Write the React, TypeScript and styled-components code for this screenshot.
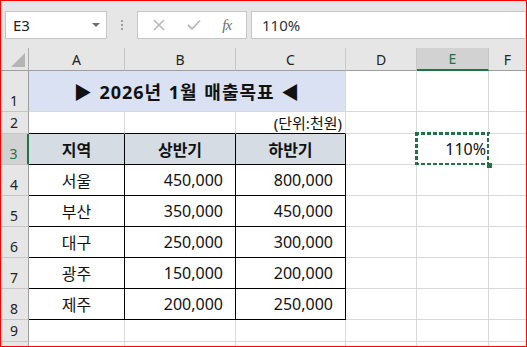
import styled, { createGlobalStyle, css } from "styled-components";

const GlobalStyle = createGlobalStyle`
  body {
    margin: 0;
    background: #fff;
    font-family: "Noto Sans", "Noto Sans CJK KR", sans-serif;
  }
`;

const GRID = "#d9d9d9";
const HEAD_LINE = "#c6c6c6";
const HEAD_BOTTOM = "#9e9e9e";
const GREEN = "#217346";

const Frame = styled.div`
  position: relative;
  width: 527px;
  height: 347px;
  overflow: hidden;
  background: #fff;
`;

const RedOutline = styled.div`
  position: absolute;
  inset: 0;
  border: 1px solid #ff0000;
  pointer-events: none;
`;

/* ---------- formula bar ---------- */

const FormulaBar = styled.div`
  display: flex;
  align-items: flex-start;
  height: 48px;
  box-sizing: border-box;
  padding: 11px 2px 0 5px;
  background: #e6e6e6;
`;

const NameBox = styled.div`
  display: flex;
  align-items: center;
  justify-content: space-between;
  width: 102px;
  height: 28px;
  box-sizing: border-box;
  padding: 0 6px 0 7px;
  border: 1px solid #c6c6c6;
  background: #fff;
  font-size: 15px;
  color: #222;
`;

const DropArrow = styled.span`
  width: 0;
  height: 0;
  border-left: 4px solid transparent;
  border-right: 4px solid transparent;
  border-top: 4px solid #6d6d6d;
`;

const Grip = styled.div`
  display: flex;
  flex-direction: column;
  align-items: center;
  justify-content: center;
  gap: 2px;
  width: 30px;
  height: 28px;
`;

const GripDot = styled.span`
  width: 2px;
  height: 2px;
  background: #a0a0a0;
`;

const FxBox = styled.div`
  display: flex;
  align-items: center;
  justify-content: space-around;
  width: 110px;
  height: 28px;
  box-sizing: border-box;
  padding: 0 4px;
  border: 1px solid #c6c6c6;
  background: #fff;
`;

const FxLabel = styled.span`
  font-family: "Liberation Serif", serif;
  font-style: italic;
  font-size: 15px;
  color: #6b6b6b;
  letter-spacing: -1px;
`;

const FormulaInput = styled.div`
  flex: 1;
  display: flex;
  align-items: center;
  height: 28px;
  box-sizing: border-box;
  margin-left: 4px;
  padding-left: 10px;
  border: 1px solid #c6c6c6;
  border-right: none;
  background: #fff;
  font-size: 15px;
  color: #333;
`;

/* ---------- sheet ---------- */

const Sheet = styled.div`
  display: grid;
  grid-template-columns: 29px 96px 111px 110px 71px 72px 38px;
  grid-template-rows: 23px 41px 22px repeat(6, 31px) 22px 22px;
`;

const Corner = styled.div`
  position: relative;
  background: #e6e6e6;
  border-right: 1px solid #ababab;
  border-bottom: 1px solid ${HEAD_BOTTOM};
`;

const CornerMark = styled.span`
  position: absolute;
  right: 3px;
  bottom: 3px;
  width: 0;
  height: 0;
  border-left: 14px solid transparent;
  border-bottom: 14px solid #b4b4b4;
`;

const ColHead = styled.div<{ $active?: boolean }>`
  display: flex;
  align-items: center;
  justify-content: center;
  box-sizing: border-box;
  background: #e6e6e6;
  border-right: 1px solid ${HEAD_LINE};
  border-bottom: 1px solid ${HEAD_BOTTOM};
  font-size: 14px;
  color: #222;
  ${(p) =>
    p.$active &&
    css`
      background: #d2d2d2;
      color: ${GREEN};
      border-bottom: 2px solid ${GREEN};
    `}
`;

const RowHead = styled.div<{ $active?: boolean }>`
  display: flex;
  align-items: flex-end;
  justify-content: center;
  box-sizing: border-box;
  padding-bottom: 1px;
  background: #e6e6e6;
  border-right: 1px solid ${HEAD_BOTTOM};
  border-bottom: 1px solid ${HEAD_LINE};
  font-size: 14px;
  line-height: 18px;
  color: #222;
  ${(p) =>
    p.$active &&
    css`
      background: #d2d2d2;
      color: ${GREEN};
      border-right: 2px solid ${GREEN};
    `}
`;

type Align = "left" | "center" | "right";

const Cell = styled.div<{
  $align?: Align;
  $span?: number;
  $fill?: string;
  $bold?: boolean;
  $boxed?: boolean;
  $topRule?: boolean;
  $size?: number;
}>`
  position: relative;
  display: flex;
  align-items: center;
  justify-content: ${(p) =>
    p.$align === "right" ? "flex-end" : p.$align === "center" ? "center" : "flex-start"};
  box-sizing: border-box;
  padding: 0 ${(p) => (p.$align === "right" ? "12px" : "4px")} 0 4px;
  grid-column: span ${(p) => p.$span ?? 1};
  background: ${(p) => p.$fill ?? "#fff"};
  border-right: 1px solid ${(p) => (p.$boxed ? "#000" : GRID)};
  border-bottom: 1px solid ${(p) => (p.$boxed || p.$topRule ? "#000" : GRID)};
  font-size: ${(p) => p.$size ?? 16}px;
  font-weight: ${(p) => (p.$bold ? 700 : 400)};
  color: #111;
  white-space: nowrap;
`;

const TitleCell = styled(Cell)`
  letter-spacing: 1px;
  word-spacing: 1px;
`;

const UnitCell = styled(Cell)`
  padding-right: 3px;
`;

const SelectedCell = styled(Cell)`
  padding-right: 2px;

  &::after {
    content: "";
    position: absolute;
    inset: -2px;
    background:
      repeating-linear-gradient(90deg, ${GREEN} 0 4px, #fff 4px 6px) top / 100% 3px no-repeat,
      repeating-linear-gradient(90deg, ${GREEN} 0 4px, #fff 4px 6px) bottom / 100% 3px no-repeat,
      repeating-linear-gradient(180deg, ${GREEN} 0 4px, #fff 4px 6px) left / 3px 100% no-repeat,
      repeating-linear-gradient(180deg, ${GREEN} 0 4px, #fff 4px 6px) right / 3px 100% no-repeat;
    pointer-events: none;
  }
`;

const FillHandle = styled.span`
  position: absolute;
  right: -4px;
  bottom: -4px;
  width: 5px;
  height: 5px;
  background: ${GREEN};
  z-index: 1;
`;

const columns = ["A", "B", "C", "D", "E", "F"];

const sales = [
  ["서울", "450,000", "800,000"],
  ["부산", "350,000", "450,000"],
  ["대구", "250,000", "300,000"],
  ["광주", "150,000", "200,000"],
  ["제주", "200,000", "250,000"],
];

const Blank = ({ n }: { n: number }) => (
  <>
    {Array.from({ length: n }, (_, i) => (
      <Cell key={i} />
    ))}
  </>
);

const XIcon = () => (
  <svg width="12" height="12" viewBox="0 0 12 12">
    <path d="M1 1 L11 11 M11 1 L1 11" stroke="#b8b8b8" strokeWidth="1.6" fill="none" />
  </svg>
);

const CheckIcon = () => (
  <svg width="14" height="12" viewBox="0 0 14 12">
    <path d="M1 6 L5 10 L13 1.5" stroke="#b8b8b8" strokeWidth="1.8" fill="none" />
  </svg>
);

const Row = ({
  index,
  region,
  first,
  second,
}: {
  index: number;
  region: string;
  first: string;
  second: string;
}) => (
  <>
    <RowHead>{index}</RowHead>
    <Cell $boxed $align="center">
      {region}
    </Cell>
    <Cell $boxed $align="right">
      {first}
    </Cell>
    <Cell $boxed $align="right">
      {second}
    </Cell>
    <Blank n={3} />
  </>
);

const App = () => {
  return (
    <Frame>
      <GlobalStyle />
      <FormulaBar>
        <NameBox>
          E3
          <DropArrow />
        </NameBox>
        <Grip>
          <GripDot />
          <GripDot />
          <GripDot />
        </Grip>
        <FxBox>
          <XIcon />
          <CheckIcon />
          <FxLabel>fx</FxLabel>
        </FxBox>
        <FormulaInput>110%</FormulaInput>
      </FormulaBar>

      <Sheet>
        <Corner>
          <CornerMark />
        </Corner>
        {columns.map((c) => (
          <ColHead key={c} $active={c === "E"}>
            {c}
          </ColHead>
        ))}

        {/* 1 */}
        <RowHead>1</RowHead>
        <TitleCell $span={3} $align="center" $fill="#d9e1f2" $bold $size={18}>
          ▶ 2026년 1월 매출목표 ◀
        </TitleCell>
        <Blank n={3} />

        {/* 2 */}
        <RowHead>2</RowHead>
        <Cell $topRule />
        <Cell $topRule />
        <UnitCell $topRule $align="right" $size={15}>
          (단위:천원)
        </UnitCell>
        <Blank n={3} />

        {/* 3 */}
        <RowHead $active>3</RowHead>
        {["지역", "상반기", "하반기"].map((h) => (
          <Cell key={h} $boxed $bold $align="center" $fill="#d6dce4">
            {h}
          </Cell>
        ))}
        <Cell />
        <SelectedCell $align="right">
          110%
          <FillHandle />
        </SelectedCell>
        <Cell />

        {sales.map(([region, first, second], i) => (
          <Row key={region} index={i + 4} region={region} first={first} second={second} />
        ))}

        <RowHead>9</RowHead>
        <Blank n={6} />
        <RowHead />
        <Blank n={6} />
      </Sheet>
      <RedOutline />
    </Frame>
  );
};

export default App;
